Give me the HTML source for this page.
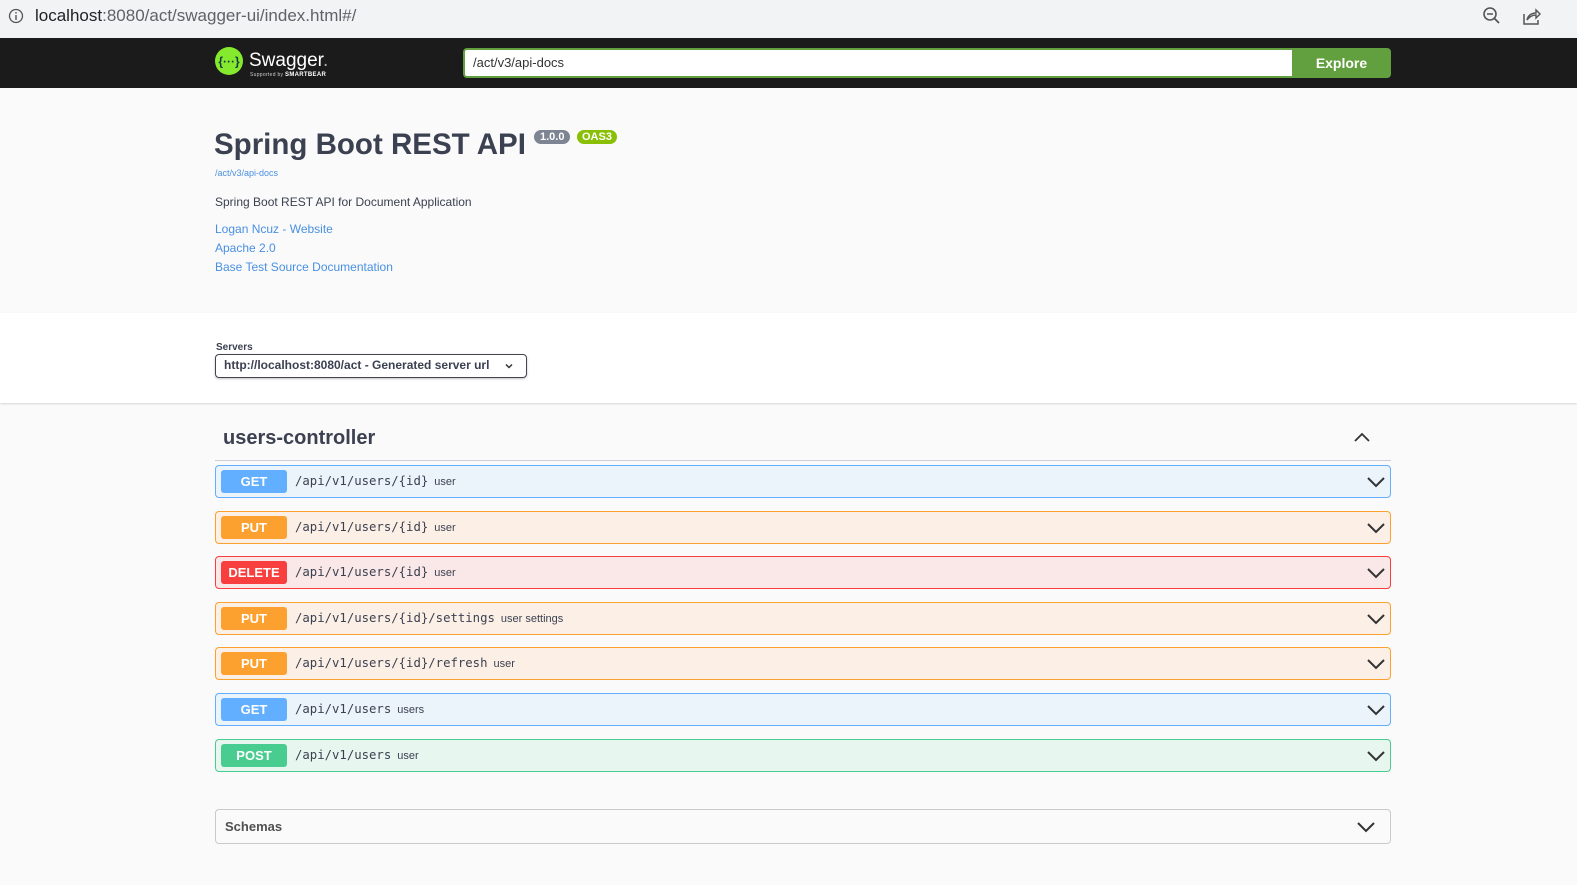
<!DOCTYPE html>
<html><head><meta charset="utf-8"><style>
*{box-sizing:border-box;margin:0;padding:0}
body{width:1577px;height:885px;overflow:hidden;background:#fafafa;font-family:"Liberation Sans",sans-serif;position:relative;color:#3b4151}
.abs{position:absolute}
.bar{left:0;top:0;width:1577px;height:38px;background:#f1f3f4}
.top{left:0;top:38px;width:1577px;height:50px;background:#1b1b1b}
.row{position:absolute;left:215px;width:1176px;height:33px;border:1px solid;border-radius:4px}
.badge{position:absolute;left:5px;top:4px;width:66px;height:23px;border-radius:3px;color:#fff;font-weight:bold;font-size:13px;text-align:center;line-height:23px}
.path{position:absolute;left:79px;top:8px;font-family:"DejaVu Sans Mono","Liberation Mono",monospace;font-size:12.3px;color:#3b4151;white-space:nowrap}
.path span{font-family:"Liberation Sans",sans-serif;font-size:11px;margin-left:6px}
.chev{position:absolute;right:4px;top:8px}
.get{background:#ebf3fb;border-color:#61affe}.get .badge{background:#61affe}
.put{background:#fcf0e6;border-color:#fca130}.put .badge{background:#fca130}
.del{background:#fae7e7;border-color:#f93e3e}.del .badge{background:#f93e3e}
.post{background:#e8f6f0;border-color:#49cc90}.post .badge{background:#49cc90}
a{color:#4990e2;text-decoration:none}
</style></head><body>
<div class="abs bar"></div>
<svg class="abs" style="left:8px;top:8px" width="16" height="16"><circle cx="8" cy="8" r="6.5" fill="none" stroke="#555" stroke-width="1.3"/><rect x="7.3" y="7" width="1.4" height="5" fill="#555"/><rect x="7.3" y="4" width="1.4" height="1.5" fill="#555"/></svg>
<div class="abs" style="left:35px;top:6px;font-size:17px;color:#202124">localhost<span style="color:#5f6368">:8080/act/swagger-ui/index.html#/</span></div>
<svg class="abs" style="left:1482px;top:6px" width="20" height="20"><circle cx="8" cy="8" r="6" fill="none" stroke="#555" stroke-width="1.6"/><line x1="5" y1="8" x2="11" y2="8" stroke="#555" stroke-width="1.5"/><line x1="12.5" y1="12.5" x2="17" y2="17" stroke="#555" stroke-width="1.8"/></svg>
<svg class="abs" style="left:1521px;top:6px" width="20" height="20"><path d="M3 8v10h14v-4" fill="none" stroke="#555" stroke-width="1.5"/><path d="M6 14c1-5 5-7 9-7V4l4 4-4 4V9c-3 0-6 1-9 5z" fill="none" stroke="#555" stroke-width="1.4"/></svg>
<div class="abs top"></div>
<svg class="abs" style="left:214px;top:46px" width="30" height="30"><circle cx="15" cy="15" r="14" fill="#85ea2d"/><text x="15" y="19.5" text-anchor="middle" font-size="12" font-weight="bold" fill="#173647" font-family="Liberation Sans">{···}</text></svg>
<div class="abs" style="left:249px;top:50px;color:#fff;font-size:19px">Swagger<span style="color:#aaa">.</span></div>
<div class="abs" style="left:250px;top:72px;color:#ccc;font-size:5px;letter-spacing:.3px">Supported by <b style="font-size:6px;color:#fff">SMARTBEAR</b></div>
<div class="abs" style="left:463px;top:48px;width:830px;height:30px;background:#fff;border:2px solid #62a03f;border-right:none;border-radius:4px 0 0 4px;font-size:13px;line-height:26px;padding-left:8px;color:#333">/act/v3/api-docs</div>
<div class="abs" style="left:1292px;top:48px;width:99px;height:30px;background:#62a03f;border-radius:0 4px 4px 0;color:#fff;font-weight:bold;font-size:14px;text-align:center;line-height:30px">Explore</div>

<div class="abs" style="left:214px;top:128px;font-size:29.5px;font-weight:bold;color:#3b4151">Spring Boot REST API</div>
<div class="abs" style="left:534px;top:130px;background:#7d8492;color:#fff;font-size:11px;font-weight:bold;border-radius:57px;padding:1px 6px">1.0.0</div>
<div class="abs" style="left:577px;top:130px;background:#89bf04;color:#fff;font-size:11px;font-weight:bold;border-radius:57px;padding:1px 5px">OAS3</div>
<div class="abs" style="left:215px;top:168px;font-size:9px"><a>/act/v3/api-docs</a></div>
<div class="abs" style="left:215px;top:195px;font-size:12px;color:#3b4151">Spring Boot REST API for Document Application</div>
<div class="abs" style="left:215px;top:220px;font-size:12px;line-height:19px"><a>Logan Ncuz - Website</a><br><a>Apache 2.0</a><br><a>Base Test Source Documentation</a></div>

<div class="abs" style="left:0;top:313px;width:1577px;height:90px;background:#fff;box-shadow:0 1px 2px rgba(0,0,0,.15)"></div>
<div class="abs" style="left:216px;top:342px;font-size:10px;font-weight:bold;color:#3b4151">Servers</div>
<div class="abs" style="left:215px;top:354px;width:312px;height:24px;border:1.5px solid #41444e;border-radius:4px;font-size:12px;font-weight:bold;line-height:21px;padding-left:8px;color:#3b4151;box-shadow:0 1px 2px rgba(0,0,0,.25)">http://localhost:8080/act - Generated server url</div>
<svg class="abs" style="left:504px;top:361px" width="10" height="10"><path d="M2 3.5l3 3 3-3" fill="none" stroke="#333" stroke-width="1.5"/></svg>

<div class="abs" style="left:223px;top:427px;font-size:20px;font-weight:bold;color:#3b4151">users-controller</div>
<svg class="abs" style="left:1353px;top:431px" width="18" height="14"><path d="M2 10l7-7 7 7" fill="none" stroke="#333" stroke-width="1.8"/></svg>
<div class="abs" style="left:215px;top:460px;width:1176px;height:1px;background:#ccd0d6"></div>

<div class="row get" style="top:465px"><div class="badge">GET</div><div class="path">/api/v1/users/{id}<span>user</span></div><svg class="chev" width="20" height="16"><path d="M2 4l8 8 8-8" fill="none" stroke="#333" stroke-width="2"/></svg></div>
<div class="row put" style="top:511px"><div class="badge">PUT</div><div class="path">/api/v1/users/{id}<span>user</span></div><svg class="chev" width="20" height="16"><path d="M2 4l8 8 8-8" fill="none" stroke="#333" stroke-width="2"/></svg></div>
<div class="row del" style="top:556px"><div class="badge">DELETE</div><div class="path">/api/v1/users/{id}<span>user</span></div><svg class="chev" width="20" height="16"><path d="M2 4l8 8 8-8" fill="none" stroke="#333" stroke-width="2"/></svg></div>
<div class="row put" style="top:602px"><div class="badge">PUT</div><div class="path">/api/v1/users/{id}/settings<span>user settings</span></div><svg class="chev" width="20" height="16"><path d="M2 4l8 8 8-8" fill="none" stroke="#333" stroke-width="2"/></svg></div>
<div class="row put" style="top:647px"><div class="badge">PUT</div><div class="path">/api/v1/users/{id}/refresh<span>user</span></div><svg class="chev" width="20" height="16"><path d="M2 4l8 8 8-8" fill="none" stroke="#333" stroke-width="2"/></svg></div>
<div class="row get" style="top:693px"><div class="badge">GET</div><div class="path">/api/v1/users<span>users</span></div><svg class="chev" width="20" height="16"><path d="M2 4l8 8 8-8" fill="none" stroke="#333" stroke-width="2"/></svg></div>
<div class="row post" style="top:739px"><div class="badge">POST</div><div class="path">/api/v1/users<span>user</span></div><svg class="chev" width="20" height="16"><path d="M2 4l8 8 8-8" fill="none" stroke="#333" stroke-width="2"/></svg></div>

<div class="abs" style="left:215px;top:809px;width:1176px;height:35px;border:1px solid #c9c9c9;border-radius:4px;background:#fafafa"></div>
<div class="abs" style="left:225px;top:819px;font-size:13px;font-weight:bold;color:#505050">Schemas</div>
<svg class="abs" style="left:1356px;top:819px" width="20" height="16"><path d="M2 4l8 8 8-8" fill="none" stroke="#333" stroke-width="2"/></svg>
</body></html>
